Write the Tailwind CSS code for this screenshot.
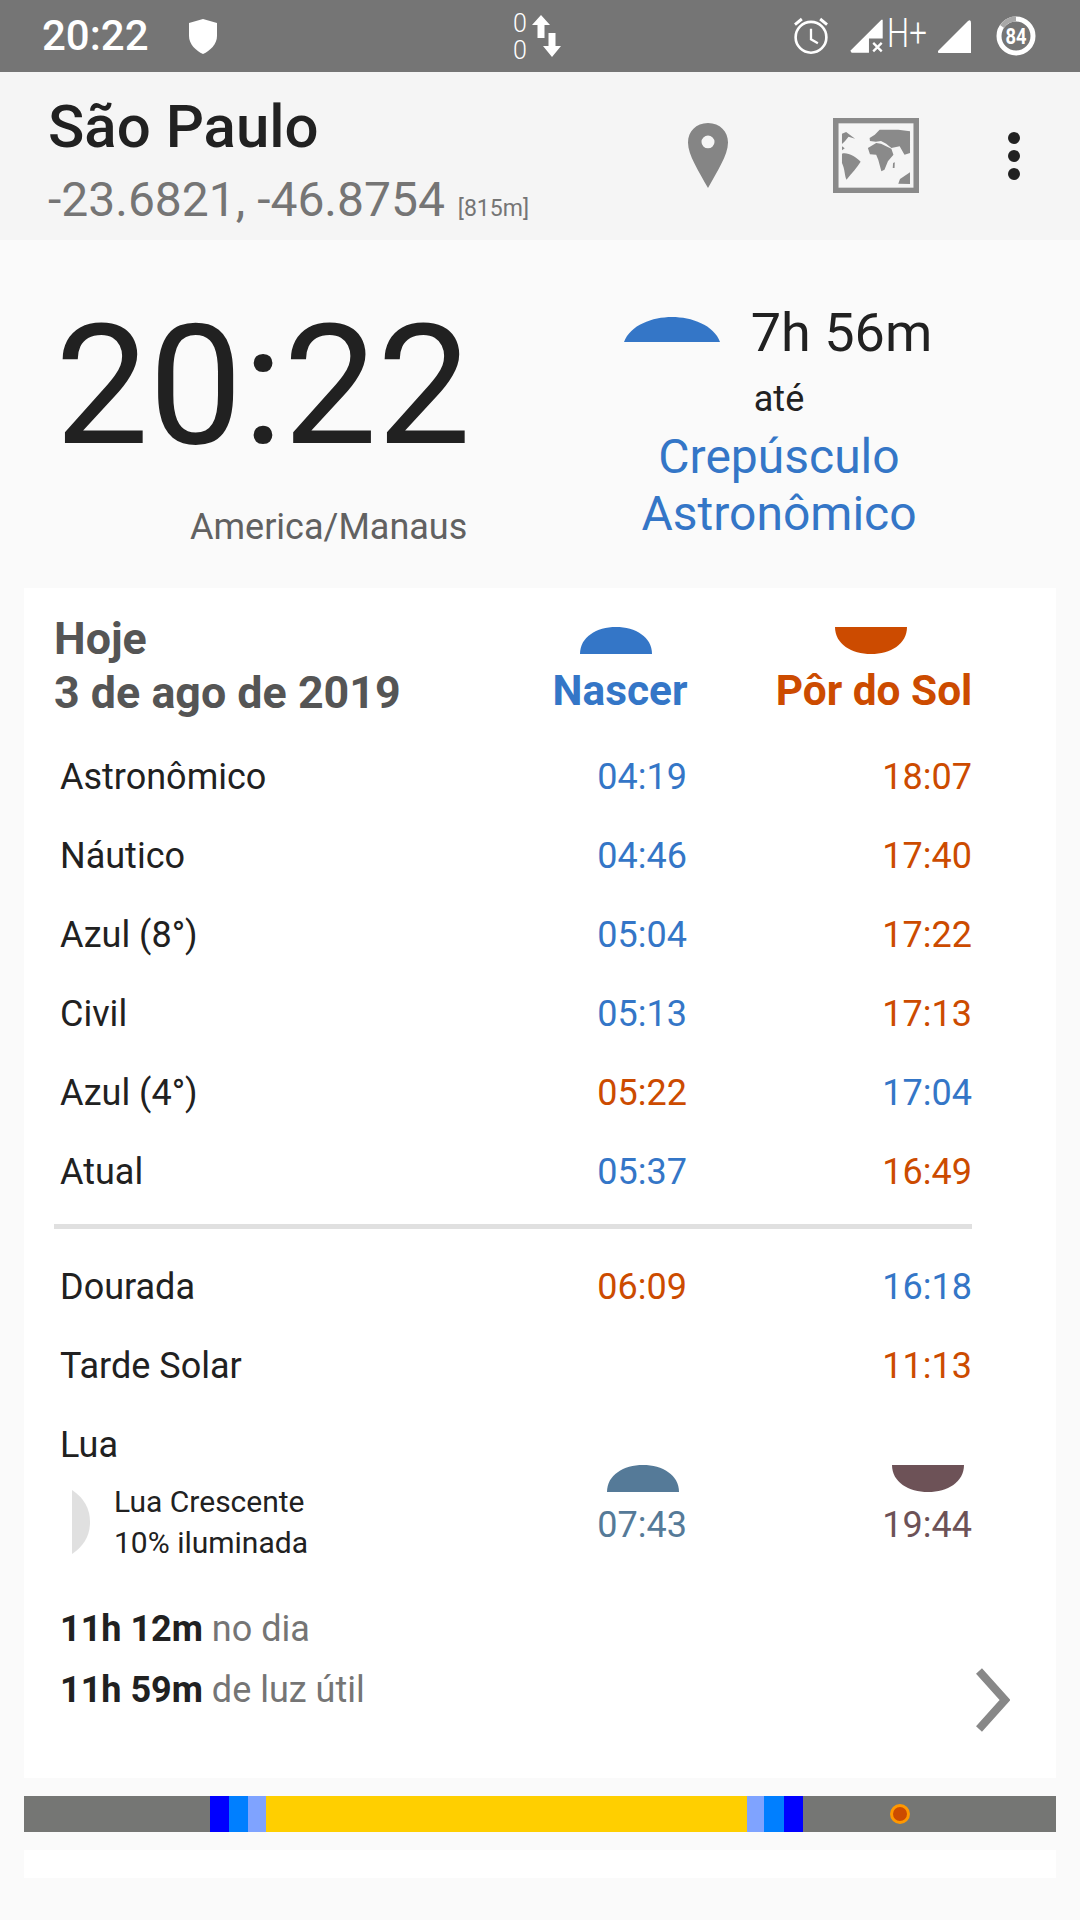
<!DOCTYPE html>
<html lang="pt">
<head>
    <meta charset="UTF-8">
    <meta name="viewport" content="width=device-width, initial-scale=1.0">
    <title>Sun Times</title>
    <script src="https://cdn.jsdelivr.net/npm/@tailwindcss/browser@4"></script>
</head>
<body class="w-[1080px] h-[1920px] overflow-hidden bg-[#fafafa] font-['Roboto',sans-serif] text-[#212121]">

    <!-- Status bar -->
    <div class="h-[72px] bg-[#757575] flex items-center text-white relative">
        <span class="ml-[42px] w-[120px] shrink-0 text-[42px] font-medium leading-none whitespace-nowrap">20:22</span>
        <svg class="ml-[26px] w-[30px] h-[35px]" viewBox="0 0 30 35"><path d="M15 0 L29 4 V17 C29 25 22 32 15 35 C8 32 1 25 1 17 V4 Z" fill="#fff"/></svg>
        <div class="ml-[295px] w-[14px] pt-[2px] flex flex-col items-center text-[25px] leading-[27px] font-light"><span>0</span><span>0</span></div>
        <svg class="ml-[3px] w-[34px] h-[48px]" viewBox="0 0 34 48" fill="#fff">
            <path d="M11 3 L20 13 H14.5 V26 H7.5 V13 H2 Z"/>
            <path d="M18.5 21 H25.5 V34 H31 L22 45 L13 34 H18.5 Z"/>
        </svg>
        <svg class="ml-[229px] w-[36px] h-[40px]" viewBox="730 50 110 120" fill="none" stroke="#fff" stroke-width="8">
            <circle cx="785" cy="114" r="47"/>
            <path d="M785 88 V120 L806 132" stroke-width="7"/>
            <path d="M736 75 L757 58 M834 75 L813 58" stroke-width="9"/>
        </svg>
        <svg class="ml-[21px] w-[34px] h-[34px]" viewBox="900 58 102 104" fill="#fff">
            <path d="M900 155 L995 60 H999 V118 H957 V161 H904 Z"/>
            <path d="M970 131 L996 157 M996 131 L970 157" stroke="#fff" stroke-width="7"/>
        </svg>
        <span class="w-[44px] text-[40px] font-light leading-none pl-[4px] origin-left scale-x-[0.78] -translate-y-[2px]">H+</span>
        <svg class="ml-[10px] w-[34px] h-[34px]" viewBox="0 0 34 34"><path d="M0 32 L30 2 Q33 0 33 4 V34 H2 Q-1 34 0 32 Z" fill="#fff"/></svg>
        <svg class="ml-[24px] w-[40px] h-[40px]" viewBox="0 0 40 40" fill="none">
            <circle cx="20" cy="20" r="17" stroke="#fff" stroke-width="5"/>
            <path d="M6 10.5 A17 17 0 0 1 20 3" stroke="#a8a8a8" stroke-width="5"/>
            <text x="20" y="28" text-anchor="middle" fill="#fff" font-family="Roboto" font-weight="700" font-size="22" textLength="21" lengthAdjust="spacingAndGlyphs">84</text>
        </svg>
    </div>

    <!-- App bar -->
    <div class="h-[168px] bg-[#f5f5f5] flex items-start relative">
        <div class="ml-[48px] w-[620px] shrink-0 pt-[22px]">
            <div class="text-[60px] leading-[66px] font-medium">São Paulo</div>
            <div class="text-[#757575] text-[48px] leading-[54px] mt-[13px] whitespace-nowrap">-23.6821, -46.8754 <span class="text-[23px] ml-[1px]">[815m]</span></div>
        </div>
        <svg class="ml-[19px] mt-[51px] w-[42px] h-[66px] shrink-0" viewBox="0 0 42 68" preserveAspectRatio="none">
            <path d="M21 0 C33 0 41 9 41 20 C41 33 30 50 21 67 C12 50 1 33 1 20 C1 9 9 0 21 0 Z M21 13 A6.5 6.5 0 1 0 21 26 A6.5 6.5 0 1 0 21 13 Z" fill="#858585" fill-rule="evenodd"/>
        </svg>
        <svg class="ml-[104px] mt-[46px] w-[86px] h-[75px] shrink-0" viewBox="851 355 249 225" preserveAspectRatio="none">
            <rect x="859" y="363" width="233" height="209" fill="none" stroke="#8a8a8a" stroke-width="16"/>
            <g fill="#8a8a8a">
                <path d="M877 402 L889 397 L915 417 L896 411 L886 424 L877 433 Z"/>
                <path d="M877 440 L885 446 L877 452 Z"/>
                <path d="M877 462 C893 457 916 470 931 486 C920 505 905 520 890 540 C884 527 886 510 877 490 Z"/>
                <path d="M957 415 L972 405 L986 390 L1040 390 L1074 395 L1074 460 L1058 465 L1044 440 L1020 445 L1005 432 L990 424 L975 426 L958 424 Z"/>
                <path d="M952 445 L976 430 L990 432 L1020 447 L1026 465 L1010 485 L1000 510 L991 515 L982 480 L976 465 L958 464 Z"/>
                <path d="M1025 490 L1030 488 L1029 505 L1024 505 Z"/>
                <path d="M1040 552 L1045 538 L1074 518 L1074 553 Z"/>
            </g>
        </svg>
        <div class="ml-[89px] mt-[60px] flex flex-col gap-[6px]">
            <span class="w-[12px] h-[12px] rounded-full bg-[#212121]"></span>
            <span class="w-[12px] h-[12px] rounded-full bg-[#212121]"></span>
            <span class="w-[12px] h-[12px] rounded-full bg-[#212121]"></span>
        </div>
    </div>

    <!-- Clock + next event -->
    <div class="h-[348px] flex">
        <div class="w-[560px] pl-[55px] pt-[61px]">
            <div class="text-[167px] leading-[170px]">20:22</div>
            <div class="pl-[135px] mt-[36px] text-[36px] leading-[40px] text-[#616161]">America/Manaus</div>
        </div>
        <div class="w-[440px] flex flex-col items-center -ml-[1px]">
            <div class="flex items-center mt-[60px] h-[66px] -ml-[4px]">
                <svg class="w-[96px] h-[25px] ml-[2px] mr-[31px] mb-[7px] shrink-0" viewBox="0 0 94 25" preserveAspectRatio="none"><path d="M0 25 C6 8 28 0 47 0 C66 0 88 8 94 25 Z" fill="#3476c7"/></svg>
                <span class="text-[54px] leading-none whitespace-nowrap">7h 56m</span>
            </div>
            <div class="text-[36px] leading-[40px] mt-[13px]">até</div>
            <div class="text-[#3476c7] text-[48px] leading-[57px] text-center mt-[9px]">Crepúsculo<br>Astronômico</div>
        </div>
    </div>

    <!-- Card -->
    <div class="mx-[24px] h-[1190px] bg-white flex flex-col relative">
        <div class="flex h-[149px]">
            <div class="ml-[30px] w-[470px] shrink-0 pt-[24px] text-[44.8px] leading-[54px] font-bold text-[#555555] whitespace-nowrap">Hoje<br>3 de ago de 2019</div>
            <div class="w-[192px] flex flex-col items-center pt-[39px]">
                <svg class="w-[72px] h-[27px] mr-[8px]" viewBox="0 0 70 27" preserveAspectRatio="none"><path d="M0 27 C0 10 16 0 35 0 C54 0 70 10 70 27 Z" fill="#3476c7"/></svg>
                <span class="text-[42.4px] leading-[48px] font-bold text-[#3476c7] mt-[13px]">Nascer</span>
            </div>
            <div class="w-[316px] flex flex-col items-center pt-[39px]">
                <svg class="w-[72px] h-[27px] mr-[6px]" viewBox="0 0 70 27" preserveAspectRatio="none"><path d="M0 0 C0 17 16 27 35 27 C54 27 70 17 70 0 Z" fill="#cc4b00"/></svg>
                <span class="text-[42.4px] leading-[48px] font-bold text-[#cc4b00] mt-[13px] whitespace-nowrap">Pôr do Sol</span>
            </div>
        </div>

        <div class="ml-[36px] w-[912px] text-[36px]">
            <div class="grid grid-cols-[1fr_200px_285px] h-[79px] items-center"><span>Astronômico</span><span class="text-right text-[#3476c7]">04:19</span><span class="text-right text-[#cc4b00]">18:07</span></div>
            <div class="grid grid-cols-[1fr_200px_285px] h-[79px] items-center"><span>Náutico</span><span class="text-right text-[#3476c7]">04:46</span><span class="text-right text-[#cc4b00]">17:40</span></div>
            <div class="grid grid-cols-[1fr_200px_285px] h-[79px] items-center"><span>Azul (8°)</span><span class="text-right text-[#3476c7]">05:04</span><span class="text-right text-[#cc4b00]">17:22</span></div>
            <div class="grid grid-cols-[1fr_200px_285px] h-[79px] items-center"><span>Civil</span><span class="text-right text-[#3476c7]">05:13</span><span class="text-right text-[#cc4b00]">17:13</span></div>
            <div class="grid grid-cols-[1fr_200px_285px] h-[79px] items-center"><span>Azul (4°)</span><span class="text-right text-[#cc4b00]">05:22</span><span class="text-right text-[#3476c7]">17:04</span></div>
            <div class="grid grid-cols-[1fr_200px_285px] h-[79px] items-center"><span>Atual</span><span class="text-right text-[#3476c7]">05:37</span><span class="text-right text-[#cc4b00]">16:49</span></div>
        </div>

        <div class="ml-[30px] w-[918px] h-[5px] bg-[#e0e0e0] mt-[13px] mb-[18px]"></div>

        <div class="ml-[36px] w-[912px] text-[36px]">
            <div class="grid grid-cols-[1fr_200px_285px] h-[79px] items-center"><span>Dourada</span><span class="text-right text-[#cc4b00]">06:09</span><span class="text-right text-[#3476c7]">16:18</span></div>
            <div class="grid grid-cols-[1fr_200px_285px] h-[79px] items-center"><span>Tarde Solar</span><span></span><span class="text-right text-[#cc4b00]">11:13</span></div>
            <div class="grid grid-cols-[1fr_200px_285px] h-[157px] items-start">
                <div>
                    <div class="h-[76px] leading-[80px]">Lua</div>
                    <div class="flex items-center">
                        <svg class="ml-[12px] w-[18px] h-[64px]" viewBox="0 0 18 64"><path d="M0 0 Q18 12 18 32 Q18 52 0 64 Z" fill="#e0e0e0"/></svg>
                        <div class="ml-[24px] text-[30px] leading-[41px] whitespace-nowrap">Lua Crescente<br>10% iluminada</div>
                    </div>
                </div>
                <div class="flex flex-col items-end pt-[60px]">
                    <svg class="w-[72px] h-[27px] mr-[8px]" viewBox="0 0 70 27" preserveAspectRatio="none"><path d="M0 27 C0 10 16 0 35 0 C54 0 70 10 70 27 Z" fill="#557a98"/></svg>
                    <span class="text-[#557a98] leading-[44px] mt-[11px]">07:43</span>
                </div>
                <div class="flex flex-col items-end pt-[60px]">
                    <svg class="w-[72px] h-[27px] mr-[8px]" viewBox="0 0 70 27" preserveAspectRatio="none"><path d="M0 0 C0 17 16 27 35 27 C54 27 70 17 70 0 Z" fill="#6d5257"/></svg>
                    <span class="text-[#6d5257] leading-[44px] mt-[11px]">19:44</span>
                </div>
            </div>
        </div>

        <div class="ml-[36px] mr-[46px] mt-[37px] flex justify-between text-[36px] leading-[61px]">
            <div>
                <div><b class="font-bold">11h 12m</b> <span class="text-[#757575]">no dia</span></div>
                <div><b class="font-bold">11h 59m</b> <span class="text-[#757575]">de luz útil</span></div>
            </div>
            <svg class="w-[34px] h-[64px] mt-[69px]" viewBox="0 0 34 64" fill="none"><path d="M3 3 L29 32 L3 61" stroke="#888888" stroke-width="8"/></svg>
        </div>
    </div>

    <!-- Day bar -->
    <div class="mx-[24px] mt-[18px] h-[36px] flex relative">
        <div class="w-[186px] bg-[#757674]"></div>
        <div class="w-[19px] bg-[#0000ff]"></div>
        <div class="w-[19px] bg-[#007fff]"></div>
        <div class="w-[18px] bg-[#7fa3ff]"></div>
        <div class="w-[481px] bg-[#ffcf00]"></div>
        <div class="w-[17px] bg-[#7fa3ff]"></div>
        <div class="w-[20px] bg-[#007fff]"></div>
        <div class="w-[19px] bg-[#0000ff]"></div>
        <div class="flex-1 bg-[#757674]"></div>
        <span class="absolute left-[866px] top-[8px] w-[20px] h-[20px] rounded-full bg-[#cc4b00] border-[3px] border-[#ff9800]"></span>
    </div>
    <div class="mx-[24px] mt-[18px] h-[28px] bg-white"></div>
</body>
</html>
